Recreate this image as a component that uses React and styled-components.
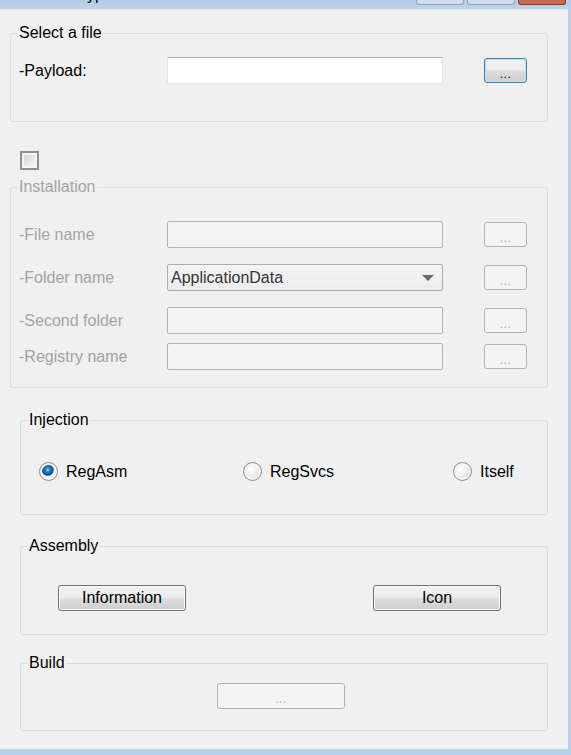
import React from "react";
import styled, { createGlobalStyle } from "styled-components";

const Global = createGlobalStyle`
  html, body { margin: 0; padding: 0; overflow: hidden; }
  body { font-family: "Liberation Sans", Arial, sans-serif; }
  * { box-sizing: border-box; }
`;

const Window = styled.div`
  width: 571px;
  height: 755px;
  background: #b9d1ea;
  display: flex;
  flex-direction: column;
`;

const TitleBar = styled.div`
  height: 9px;
  flex: none;
  display: flex;
  align-items: flex-start;
  padding-right: 5px;
  overflow: hidden;
  background: linear-gradient(#b4cce6, #bcd3eb);
`;

const Title = styled.span`
  font-size: 16px;
  line-height: 18px;
  margin-top: -14px;
  padding-left: 70px;
  color: #000;
`;

const Caption = styled.div`
  width: 48px;
  height: 5px;
  margin-left: ${p => p.$first ? "auto" : "3px"};
  border: 1px solid ${p => p.$close ? "#8a3a2b" : "#8fa3bf"};
  border-top: none;
  border-radius: 0 0 3px 3px;
  background: ${p => p.$close ? "#c96a52" : "#cfdcee"};
`;

const Frame = styled.div`
  flex: 1;
  margin: 0 3px 6px 0;
  background: #f0f0f0;
  padding: 15px 0 0 10px;
`;

const Group = styled.fieldset`
  width: ${p => p.$inset ? 528 : 538}px;
  margin: ${p => p.$top || 0}px 0 0 ${p => p.$inset ? 10 : 0}px;
  padding: 0;
  min-width: 0;
  border: 1px solid #d5dfe5;
  border-radius: 3px;
`;

const Legend = styled.legend`
  margin-left: 7px;
  padding: 0 1px;
  font-size: 16px;
  line-height: 18px;
  color: ${p => p.$disabled ? "#a3a3a3" : "#000"};
`;

const Body = styled.div`
  padding: ${p => p.$pad};
`;

const Row = styled.div`
  display: flex;
  align-items: center;
  height: 27px;
  margin-top: ${p => p.$gap || 0}px;
`;

const Label = styled.span`
  width: 148px;
  flex: none;
  font-size: 16px;
  color: ${p => p.$disabled ? "#a3a3a3" : "#000"};
`;

const TextBox = styled.div`
  width: 276px;
  height: 27px;
  flex: none;
  border: 1px solid ${p => p.$disabled ? "#adb2b5" : "#e1e6ec"};
  border-top-color: ${p => p.$disabled ? "#adb2b5" : "#abadb3"};
  border-radius: ${p => p.$disabled ? 2 : 1}px;
  background: ${p => p.$disabled ? "#f3f3f3" : "#fff"};
`;

const Combo = styled(TextBox)`
  display: flex;
  align-items: center;
  justify-content: space-between;
  padding: 0 8px 0 3px;
  border-color: #acacac;
  background: linear-gradient(#f4f4f4, #ececec);
  font-size: 16px;
  color: #333;
`;

const Arrow = styled.span`
  width: 0;
  height: 0;
  border-left: 6px solid transparent;
  border-right: 6px solid transparent;
  border-top: 6px solid #6b6b6b;
`;

const Button = styled.div`
  flex: none;
  display: flex;
  align-items: center;
  justify-content: center;
  width: ${p => p.$w}px;
  height: ${p => p.$h}px;
  margin-left: ${p => p.$ml || 0}px;
  border: 1px solid ${p => p.$disabled ? "#adb2b5" : p.$focus ? "#3c7fb1" : "#707070"};
  border-radius: 3px;
  font-size: 16px;
  color: ${p => p.$disabled ? "#a8a8a8" : "#000"};
  background: ${p => p.$disabled
    ? "#f4f4f4"
    : "linear-gradient(#f2f2f2 0%, #ebebeb 49%, #dddddd 51%, #cfcfcf 100%)"};
  box-shadow: ${p => p.$disabled ? "none" : p.$focus ? "inset 0 0 0 1px #b6e3f8" : "inset 0 0 0 1px #fcfcfc"};
`;

const Dots = styled.span`
  font-size: 12px;
  padding-top: 6px;
  letter-spacing: 0.5px;
`;

const Check = styled.div`
  width: 19px;
  height: 19px;
  margin: 29px 0 0 10px;
  border: 2px solid #8f8f8f;
  padding: 2px;
  background: #f4f4f4;
  & > div {
    width: 100%;
    height: 100%;
    background: linear-gradient(135deg, #cfd7e2, #f4f4f4);
  }
`;

const Radios = styled.div`
  display: grid;
  grid-template-columns: 204px 210px auto;
  align-items: center;
  height: 18px;
`;

const RadioItem = styled.div`
  display: flex;
  align-items: center;
  gap: 8px;
  font-size: 16px;
  color: #000;
`;

const RadioDot = styled.span`
  width: 19px;
  height: 19px;
  border-radius: 50%;
  border: 1px solid #8c8e90;
  background: ${p => p.$on
    ? "radial-gradient(circle at 45% 40%, #9fd6ff 0, #2a8ad4 2px, #0d4f8f 5px, #0d4f8f 5.5px, #f4f4f4 6.5px, #e0e0e0 100%)"
    : "radial-gradient(circle at 40% 35%, #ffffff 0, #ececec 45%, #cfcfcf 100%)"};
  box-shadow: inset 0 0 0 2px #f6f6f6;
`;

const Buttons = styled.div`
  display: flex;
  gap: 187px;
`;

const rows = [
  { label: "-File name", gap: 0 },
  { label: "-Folder name", gap: 16, combo: "ApplicationData" },
  { label: "-Second folder", gap: 16 },
  { label: "-Registry name", gap: 9 },
];

const Radio = ({ on, children }) => (
  <RadioItem>
    <RadioDot $on={on} />
    {children}
  </RadioItem>
);

export default function App() {
  return (
    <Window>
      <Global />
      <TitleBar>
        <Title>Crypter</Title>
        <Caption $first />
        <Caption />
        <Caption $close />
      </TitleBar>
      <Frame>
        <Group>
          <Legend>Select a file</Legend>
          <Body $pad="15px 0 37px 8px">
            <Row>
              <Label>-Payload:</Label>
              <TextBox />
              <Button $w={43} $h={25} $ml={41} $focus><Dots>...</Dots></Button>
            </Row>
          </Body>
        </Group>

        <Check><div /></Check>

        <Group $top={8}>
          <Legend $disabled>Installation</Legend>
          <Body $pad="25px 0 17px 8px">
            {rows.map(r => (
              <Row key={r.label} $gap={r.gap}>
                <Label $disabled>{r.label}</Label>
                {r.combo
                  ? <Combo $disabled>{r.combo}<Arrow /></Combo>
                  : <TextBox $disabled />}
                <Button $w={43} $h={25} $ml={41} $disabled><Dots>...</Dots></Button>
              </Row>
            ))}
          </Body>
        </Group>

        <Group $inset $top={23}>
          <Legend>Injection</Legend>
          <Body $pad="33px 0 34px 18px">
            <Radios>
              <Radio on>RegAsm</Radio>
              <Radio>RegSvcs</Radio>
              <Radio>Itself</Radio>
            </Radios>
          </Body>
        </Group>

        <Group $inset $top={22}>
          <Legend>Assembly</Legend>
          <Body $pad="30px 0 23px 37px">
            <Buttons>
              <Button $w={128} $h={26}>Information</Button>
              <Button $w={128} $h={26}>Icon</Button>
            </Buttons>
          </Body>
        </Group>

        <Group $inset $top={19}>
          <Legend>Build</Legend>
          <Body $pad="11px 0 21px 196px">
            <Button $w={128} $h={26} $disabled><Dots>...</Dots></Button>
          </Body>
        </Group>
      </Frame>
    </Window>
  );
}
